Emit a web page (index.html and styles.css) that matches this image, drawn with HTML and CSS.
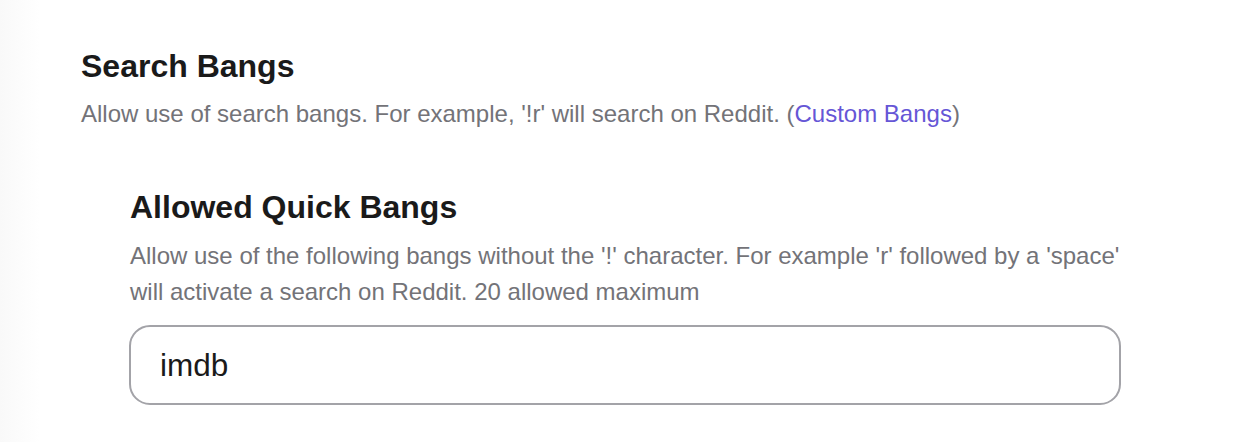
FILE: index.html
```html
<!DOCTYPE html>
<html lang="en">
<head>
<meta charset="utf-8">
<title>Search Bangs</title>
<link rel="stylesheet" href="styles.css">
</head>
<body>
<div class="page">
  <section class="setting">
    <h2 class="setting-title">Search Bangs</h2>
    <p class="setting-desc">Allow use of search bangs. For example, '!r' will search on Reddit. (<a class="link" href="#">Custom Bangs</a>)</p>
    <div class="subsetting">
      <h2 class="setting-title">Allowed Quick Bangs</h2>
      <p class="setting-desc sub-desc">Allow use of the following bangs without the '!' character. For example 'r' followed by a 'space' will activate a search on Reddit. 20 allowed maximum</p>
      <input class="bang-input" type="text" value="imdb">
    </div>
  </section>
</div>
</body>
</html>
```
FILE: styles.css
```css
* { box-sizing: border-box; }
html, body { margin: 0; padding: 0; }
body {
  width: 1246px;
  height: 442px;
  overflow: hidden;
  background: linear-gradient(to right, #f9f9f9 0, #fcfcfc 20px, #ffffff 40px);
  font-family: "Liberation Sans", Arial, sans-serif;
}
.page {
  padding: 47px 0 0 81px;
}
.setting-title {
  margin: 0;
  font-size: 32px;
  line-height: 38px;
  font-weight: 700;
  color: #1a1a1a;
}
.setting-desc {
  margin: 11px 0 0;
  font-size: 24px;
  line-height: 36px;
  color: #737378;
}
.link {
  color: #6656d6;
  text-decoration: none;
}
.subsetting {
  margin-top: 56px;
  padding-left: 49px;
  width: 1041px;
}
.sub-desc {
  margin-top: 12px;
}
.bang-input {
  display: block;
  margin: 15px 0 0 -1px;
  width: 992px;
  height: 80px;
  border: 2px solid #a3a3a8;
  border-radius: 21px;
  padding: 0 0 0 29px;
  font-family: "Liberation Sans", Arial, sans-serif;
  font-size: 31.5px;
  color: #1a1a1a;
  background: #fff;
  outline: none;
}
```
